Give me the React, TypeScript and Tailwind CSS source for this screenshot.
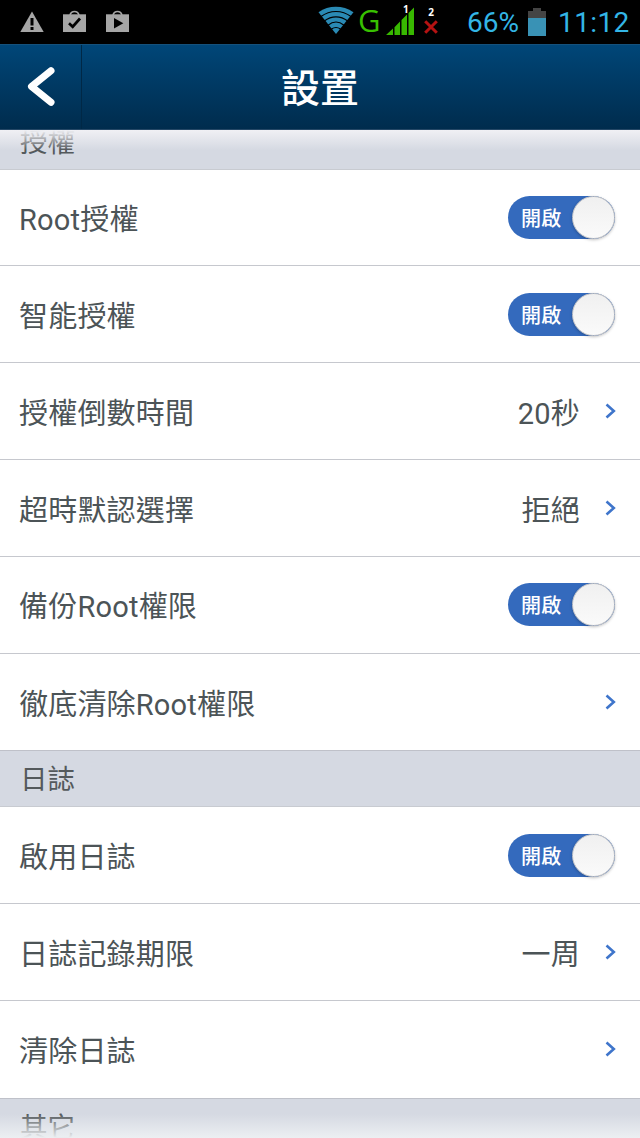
import { ReactNode } from "react";

type Item = {
  label: string;
  value?: string;
  toggle?: boolean;
};

const AUTH_ITEMS: Item[] = [
  { label: "Root授權", toggle: true },
  { label: "智能授權", toggle: true },
  { label: "授權倒數時間", value: "20秒" },
  { label: "超時默認選擇", value: "拒絕" },
  { label: "備份Root權限", toggle: true },
  { label: "徹底清除Root權限" },
];

const LOG_ITEMS: Item[] = [
  { label: "啟用日誌", toggle: true },
  { label: "日誌記錄期限", value: "一周" },
  { label: "清除日誌" },
];

function StatusBar() {
  return (
    <div className="flex h-11 shrink-0 items-start bg-black text-[#33b5e5]">
      <svg className="ml-5 mt-[11px] h-[22px] w-6" viewBox="0 0 24 22">
        <path d="M12 0.5 23.7 21H0.3Z" fill="#a6a6a6" />
        <path d="M10.5 7h3v7.5h-3zM10.500 16h3v3h-3z" fill="#000" />
      </svg>
      <svg className="ml-[19px] mt-[9px] h-6 w-[23px]" viewBox="0 0 23 24">
        <path d="M7 6a4.7 5 0 0 1 9 0" fill="none" stroke="#a6a6a6" strokeWidth="1.6" />
        <path d="M0 5.3h23V23H0z" fill="#a6a6a6" />
        <path d="M6 14.2l3.7 3.5 7.3-8.2" fill="none" stroke="#000" strokeWidth="2.7" />
      </svg>
      <svg className="ml-5 mt-[9px] h-6 w-[23px]" viewBox="0 0 23 24">
        <path d="M7 6a4.7 5 0 0 1 9 0" fill="none" stroke="#a6a6a6" strokeWidth="1.6" />
        <path d="M0 5.3h23V23H0z" fill="#a6a6a6" />
        <path d="M8 9l9.3 5.2L8 19.4z" fill="#000" />
      </svg>

      {/* Wifi fan with dark arcs cut out */}
      <svg className="ml-[189px] mt-[6px] h-[29px] w-9" viewBox="0 0 36 29">
        <path d="M0.5 6.3C10.8-1 24.7-1 35.5 6.3L18 28Z" fill="#2a8ab4" />
        <g fill="none" stroke="#000" strokeWidth="1.2">
          <path d="M3 10.5C12 3.8 24 3.8 33 10.5" />
          <path d="M6.3 15C13.5 9.4 22.5 9.4 29.7 15" />
          <path d="M10 19.2C15 15.2 21 15.2 26 19.2" />
          <path d="M13.5 23C16.5 21 19.5 21 22.5 23" />
        </g>
      </svg>
      <span className="ml-[4px] mt-[3px] w-[23px] font-['Open_Sans','Noto_Sans',sans-serif] text-[31px] font-medium leading-[34px] text-[#38c000]">
        G
      </span>
      <div className="relative ml-[5px] mt-[7px] h-7 w-7">
        <svg className="h-7 w-7" viewBox="0 0 28 28" fill="#38b800">
          <path d="M0 28l7-6.5V28zM8.5 20.2l5.5-5.7V28H8.5zM15.5 13l5.5-5.5V28h-5.5zM22.5 6L28 .5V28h-5.5z" />
        </svg>
        <span className="absolute -top-[3px] left-[17px] font-['Noto_Sans',sans-serif] text-[10px] font-bold leading-[10px] text-white">
          1
        </span>
      </div>
      <div className="ml-[9px] mt-[7px] flex w-4 flex-col items-center">
        <span className="font-['Noto_Sans',sans-serif] text-[10px] font-bold leading-[10px] text-white">2</span>
        <svg className="mt-[3px] h-[14px] w-[14px]" viewBox="0 0 14 14">
          <path d="M1.2 1.2l11.6 11.6M12.8 1.2L1.2 12.8" stroke="#b51212" strokeWidth="3" />
        </svg>
      </div>
      <span className="ml-[28px] mt-[7px] w-[54px] font-[Roboto,sans-serif] text-[28px] leading-8">66%</span>
      <svg className="ml-[7px] mt-2 h-7 w-[18px]" viewBox="0 0 18 28">
        <path d="M0 3h5V0h8v3h5v25H0z" fill="#444" />
        <path d="M0 10h18v18H0z" fill="#3992b5" />
      </svg>
      <span className="ml-[12px] mt-[7px] whitespace-nowrap font-[Roboto,sans-serif] text-[28px] leading-8 tracking-[0.4px]">
        11:12
      </span>
    </div>
  );
}

function Header() {
  return (
    <div className="flex h-[86px] shrink-0 border-y border-t-[#15517c] border-b-[#244766] bg-linear-to-b from-[#004678] to-[#002c4d]">
      <button className="flex w-[82px] shrink-0 items-center border-r border-[#002846] pl-[27px]">
        <svg className="h-10 w-7" viewBox="0 0 28 40">
          <path
            d="M24 3.8L4.5 19.5L24 35.2"
            fill="none"
            stroke="#fff"
            strokeWidth="7"
            strokeLinecap="round"
            strokeLinejoin="round"
          />
        </svg>
      </button>
      <h1 className="flex-1 pr-[82px] text-center text-[39px] font-medium leading-[89px] text-white">設置</h1>
    </div>
  );
}

function Section({ children }: { children: ReactNode }) {
  return (
    <div className="h-[56.8px] shrink-0 border-y border-t-[#bfc1c9] border-b-[#c8cbd1] bg-[#d5d9e2] pl-5 text-[27.5px] leading-[58px] text-[#54595c]">
      {children}
    </div>
  );
}

function Toggle() {
  return (
    <div className="mr-[25px] flex h-[43px] w-[107px] items-center justify-between rounded-full bg-[#346abd] pl-[13px]">
      <span className="pt-1 text-[20px] font-medium leading-[43px] text-white">開啟</span>
      <span className="h-[43px] w-[43px] rounded-full border border-[#c3c3c5] bg-linear-to-b from-[#f0f0f0] to-[#fafafa] shadow-[0_1px_3px_rgba(0,0,0,0.25)]" />
    </div>
  );
}

function Chevron() {
  return (
    <svg className="ml-[25px] mr-6 h-4 w-[11px]" viewBox="0 0 11 16">
      <path d="M1.5 1.5L8.8 8L1.5 14.5" fill="none" stroke="#3f75cb" strokeWidth="2.6" />
    </svg>
  );
}

function Row({ item, last }: { item: Item; last: boolean }) {
  return (
    <div
      className={`flex h-[96.8px] shrink-0 items-center bg-white pl-[19px] text-[29px] tracking-[0.2px] text-[#4c5457] ${
        last ? "" : "border-b border-[#c6c8ce]"
      }`}
    >
      <span className="flex-1 pt-[7px]">{item.label}</span>
      {item.toggle ? (
        <Toggle />
      ) : (
        <>
          {item.value && <span className="pt-[7px]">{item.value}</span>}
          <Chevron />
        </>
      )}
    </div>
  );
}

export default function App() {
  return (
    <div className="flex h-[1138px] w-[640px] flex-col overflow-hidden bg-white font-[Roboto,'Noto_Sans_CJK_TC',sans-serif]">
      <StatusBar />
      <Header />
      <div className="relative flex flex-1 flex-col overflow-hidden">
        <div className="-mt-[17.2px] flex flex-col">
          <Section>授權</Section>
          {AUTH_ITEMS.map((item, i) => (
            <Row key={item.label} item={item} last={i === AUTH_ITEMS.length - 1} />
          ))}
          <Section>日誌</Section>
          {LOG_ITEMS.map((item, i) => (
            <Row key={item.label} item={item} last={i === LOG_ITEMS.length - 1} />
          ))}
          <Section>其它</Section>
        </div>
        {/* Fading scroll edges */}
        <div className="absolute inset-x-0 top-0 h-5 bg-linear-to-b from-[#f0f0f4] to-transparent" />
        <div className="absolute inset-x-0 bottom-0 h-6 bg-linear-to-t from-[#eceff2] to-transparent" />
      </div>
    </div>
  );
}
